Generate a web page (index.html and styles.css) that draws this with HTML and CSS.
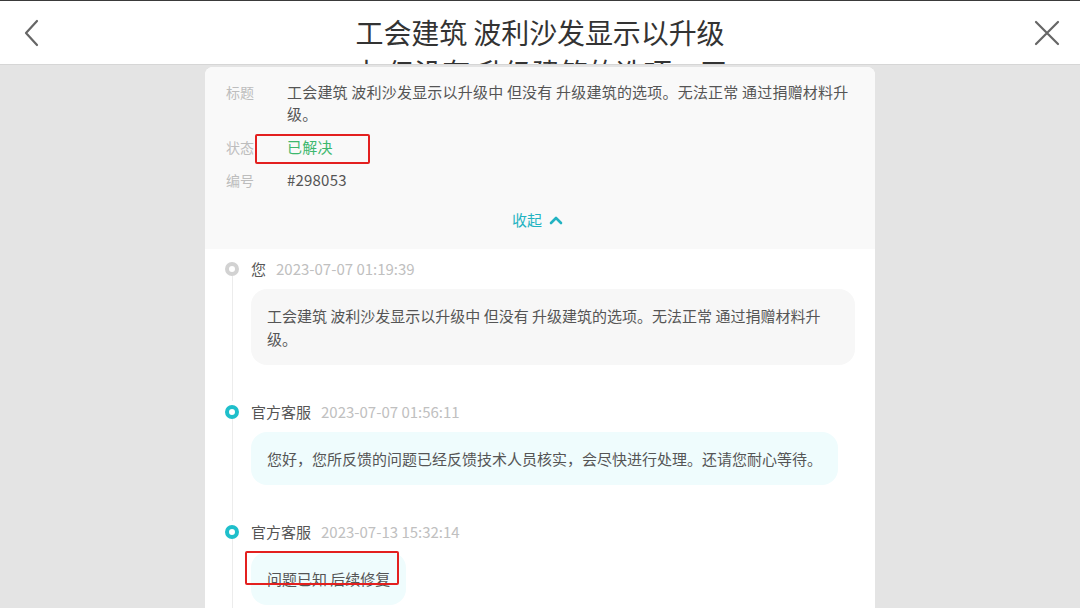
FILE: index.html
```html
<!DOCTYPE html>
<html lang="zh-CN">
<head>
<meta charset="utf-8">
<title>反馈详情</title>
<link rel="stylesheet" href="styles.css">
</head>
<body>
<div class="page">
  <header class="topbar">
    <button class="icon-btn back" aria-label="返回">
      <svg width="16" height="28" viewBox="0 0 16 28"><polyline points="13,2 2,14 13,26" fill="none" stroke="#666" stroke-width="2.2" stroke-linecap="round" stroke-linejoin="round"/></svg>
    </button>
    <h1 class="title">工会建筑 波利沙发显示以升级中 但没有 升级建筑的选项。无法正常 通过捐赠材料升级。</h1>
    <button class="icon-btn close" aria-label="关闭">
      <svg width="26" height="26" viewBox="0 0 26 26"><path d="M2 2 L24 24 M24 2 L2 24" fill="none" stroke="#666" stroke-width="2.2" stroke-linecap="round"/></svg>
    </button>
  </header>
  <main class="stage">
    <section class="card">
      <div class="summary">
        <div class="row"><span class="label">标题</span><span class="value">工会建筑 波利沙发显示以升级中 但没有 升级建筑的选项。无法正常 通过捐赠材料升级。</span></div>
        <div class="row"><span class="label">状态</span><span class="value status">已解决</span></div>
        <div class="row"><span class="label">编号</span><span class="value">#298053</span></div>
        <div class="toggle">收起
          <svg width="14" height="10" viewBox="0 0 14 10"><polyline points="2,8 7,3 12,8" fill="none" stroke="#23b3c2" stroke-width="2.6" stroke-linecap="round" stroke-linejoin="round"/></svg>
        </div>
      </div>
      <div class="timeline">
        <div class="item">
          <div class="rail"><span class="dot dot-user"></span><span class="line"></span></div>
          <div class="content">
            <div class="meta"><span class="who">您</span><span class="time">2023-07-07 01:19:39</span></div>
            <div class="bubble bubble-user">工会建筑 波利沙发显示以升级中 但没有 升级建筑的选项。无法正常 通过捐赠材料升级。</div>
          </div>
        </div>
        <div class="item">
          <div class="rail"><span class="dot dot-staff"></span><span class="line"></span></div>
          <div class="content">
            <div class="meta"><span class="who">官方客服</span><span class="time">2023-07-07 01:56:11</span></div>
            <div class="bubble bubble-staff">您好，您所反馈的问题已经反馈技术人员核实，会尽快进行处理。还请您耐心等待。</div>
          </div>
        </div>
        <div class="item">
          <div class="rail"><span class="dot dot-staff"></span><span class="line"></span></div>
          <div class="content">
            <div class="meta"><span class="who">官方客服</span><span class="time">2023-07-13 15:32:14</span></div>
            <div class="bubble bubble-staff">问题已知 后续修复</div>
          </div>
        </div>
      </div>
    </section>
  </main>
  <div class="mark mark-status"></div>
  <div class="mark mark-reply"></div>
</div>
</body>
</html>
```

FILE: styles.css
```css
* { box-sizing: border-box; }
html, body {
  margin: 0;
  padding: 0;
  width: 1080px;
  height: 608px;
  overflow: hidden;
}
body {
  font-family: "Noto Sans CJK SC", "Noto Sans", sans-serif;
  background: #e4e4e4;
  color: #555;
}
.page {
  position: relative;
  width: 1080px;
  height: 608px;
  display: flex;
  flex-direction: column;
}
.topbar {
  height: 65px;
  flex: none;
  background: #fff;
  border-top: 1px solid #3a3a3a;
  border-bottom: 1px solid #d6d6d6;
  display: flex;
  align-items: flex-start;
  justify-content: space-between;
  overflow: hidden;
}
.icon-btn {
  background: none;
  border: 0;
  padding: 0;
  width: 64px;
  height: 63px;
  display: flex;
  align-items: center;
  justify-content: center;
}
.back { justify-content: flex-start; padding-left: 24px; }
.close { justify-content: flex-end; padding-right: 20px; }
.title {
  margin: 0;
  width: 384px;
  font-size: 28px;
  font-weight: 400;
  line-height: 40px;
  padding-top: 11px;
  color: #333;
  text-align: center;
  letter-spacing: -0.1px;
}
.stage {
  flex: 1;
  display: flex;
  justify-content: center;
  padding-top: 2px;
  overflow: hidden;
}
.card {
  width: 670px;
  background: #fff;
  border-radius: 8px 8px 0 0;
  overflow: hidden;
}
.summary {
  background: #f9f9f9;
  padding: 14px 20px 18px 21px;
  display: flex;
  flex-direction: column;
  gap: 11px;
}
.row {
  display: flex;
  line-height: 22px;
}
.label {
  width: 61px;
  flex: none;
  font-size: 14px;
  color: #bdbdbd;
}
.value {
  font-size: 15px;
  color: #555;
  letter-spacing: 0.2px;
}
.status { color: #3cb86e; }
.toggle {
  margin-top: 7px;
  display: flex;
  align-items: center;
  justify-content: center;
  gap: 7px;
  font-size: 15px;
  line-height: 22px;
  color: #23b3c2;
  margin-right: 6px;
}
.timeline {
  padding: 9px 20px 0 19px;
}
.item {
  display: flex;
}
.rail {
  width: 27px;
  flex: none;
  display: flex;
  flex-direction: column;
  padding-top: 4px;
}
.dot {
  width: 14px;
  height: 14px;
  border-radius: 50%;
  margin-left: 1px;
  flex: none;
}
.dot-user { border: 4px solid #d2d2d2; background: #fff; }
.dot-staff { border: 4.5px solid #1fbfcb; background: #fff; }
.line {
  flex: 1;
  width: 1px;
  margin-left: 8px;
  background: #ececec;
}
.content {
  flex: 1;
  padding-bottom: 36px;
  display: flex;
  flex-direction: column;
  align-items: flex-start;
}
.meta {
  display: flex;
  align-items: center;
  gap: 10px;
  line-height: 22px;
  margin-bottom: 9px;
}
.who { font-size: 15px; color: #555; }
.time { font-size: 15px; color: #c0c0c0; }
.bubble {
  font-size: 15px;
  line-height: 23px;
  color: #555;
  padding: 15px 16px;
  border-radius: 16px;
  max-width: 604px;
}
.bubble-user { background: #f7f7f7; }
.bubble-staff { background: #effcfd; }
.mark {
  position: absolute;
  border: 2px solid #e3201f;
  border-radius: 2px;
}
.mark-status { left: 255px; top: 134px; width: 115px; height: 30px; }
.mark-reply { left: 245px; top: 551px; width: 154px; height: 34px; }
```
